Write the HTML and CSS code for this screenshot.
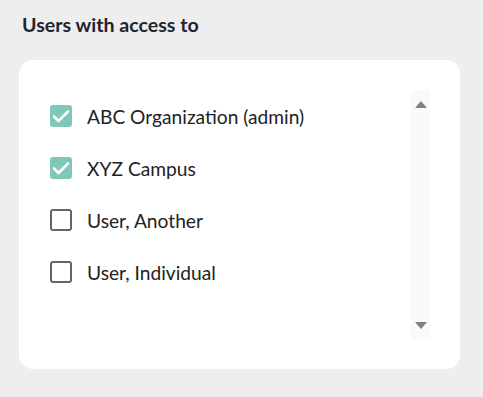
FILE: index.html
```html
<!DOCTYPE html>
<html lang="en">
<head>
    <meta charset="UTF-8">
    <meta name="viewport" content="width=device-width, initial-scale=1.0">
    <title>Users with access</title>
    <link rel="stylesheet" href="styles.css">
</head>
<body>

    <div class="panel">
        <h2 class="panel-title">Users with access to</h2>

        <div class="card">
            <ul class="user-list">
                <li class="user-row">
                    <span class="box checked">
                        <svg viewBox="0 0 22 22" width="22" height="22"><path d="M4 11.5 L8.5 16 L18 6.5" fill="none" stroke="#fff" stroke-width="2.6" stroke-linecap="round" stroke-linejoin="round"/></svg>
                    </span>
                    <span class="label">ABC Organization (admin)</span>
                </li>
                <li class="user-row">
                    <span class="box checked">
                        <svg viewBox="0 0 22 22" width="22" height="22"><path d="M4 11.5 L8.5 16 L18 6.5" fill="none" stroke="#fff" stroke-width="2.6" stroke-linecap="round" stroke-linejoin="round"/></svg>
                    </span>
                    <span class="label">XYZ Campus</span>
                </li>
                <li class="user-row">
                    <span class="box"></span>
                    <span class="label">User, Another</span>
                </li>
                <li class="user-row">
                    <span class="box"></span>
                    <span class="label">User, Individual</span>
                </li>
            </ul>

            <div class="scrollbar">
                <span class="arrow up"></span>
                <span class="arrow down"></span>
            </div>
        </div>
    </div>

</body>
</html>
```

FILE: styles.css
```css
body {
    margin: 0;
    background-color: #eeeeee;
    font-family: Lato, "Open Sans", sans-serif;
    color: #222;
}

.panel {
    padding: 13px 23px 28px 19px;
}

.panel-title {
    margin: 0 0 23px 3px;
    font-size: 19.6px;
    font-weight: bold;
    color: #1f2430;
    line-height: 24px;
}

.card {
    background-color: #fff;
    border-radius: 14px;
    height: 309px;
    display: flex;
    justify-content: space-between;
    padding: 30px 30px 0 30px;
    box-sizing: border-box;
}

.user-list {
    list-style: none;
    margin: 0;
    padding: 0;
}

.user-row {
    display: flex;
    align-items: center;
    height: 52px;
}

.box {
    width: 22px;
    height: 22px;
    box-sizing: border-box;
    border: 2.5px solid #666;
    border-radius: 3px;
    margin-left: 1px;
    margin-right: 15px;
}

.box.checked {
    border: none;
    background-color: #7fc8b8;
}

.box svg {
    display: block;
}

.label {
    font-size: 19.2px;
    color: #222;
}

.scrollbar {
    width: 19px;
    height: 250px;
    background-color: #fafafa;
    display: flex;
    flex-direction: column;
    justify-content: space-between;
    align-items: center;
    padding: 11px 0;
    box-sizing: border-box;
}

.arrow {
    width: 0;
    height: 0;
    border-left: 6px solid transparent;
    border-right: 6px solid transparent;
}

.arrow.up {
    border-bottom: 7px solid #808080;
}

.arrow.down {
    border-top: 7px solid #808080;
}
```
